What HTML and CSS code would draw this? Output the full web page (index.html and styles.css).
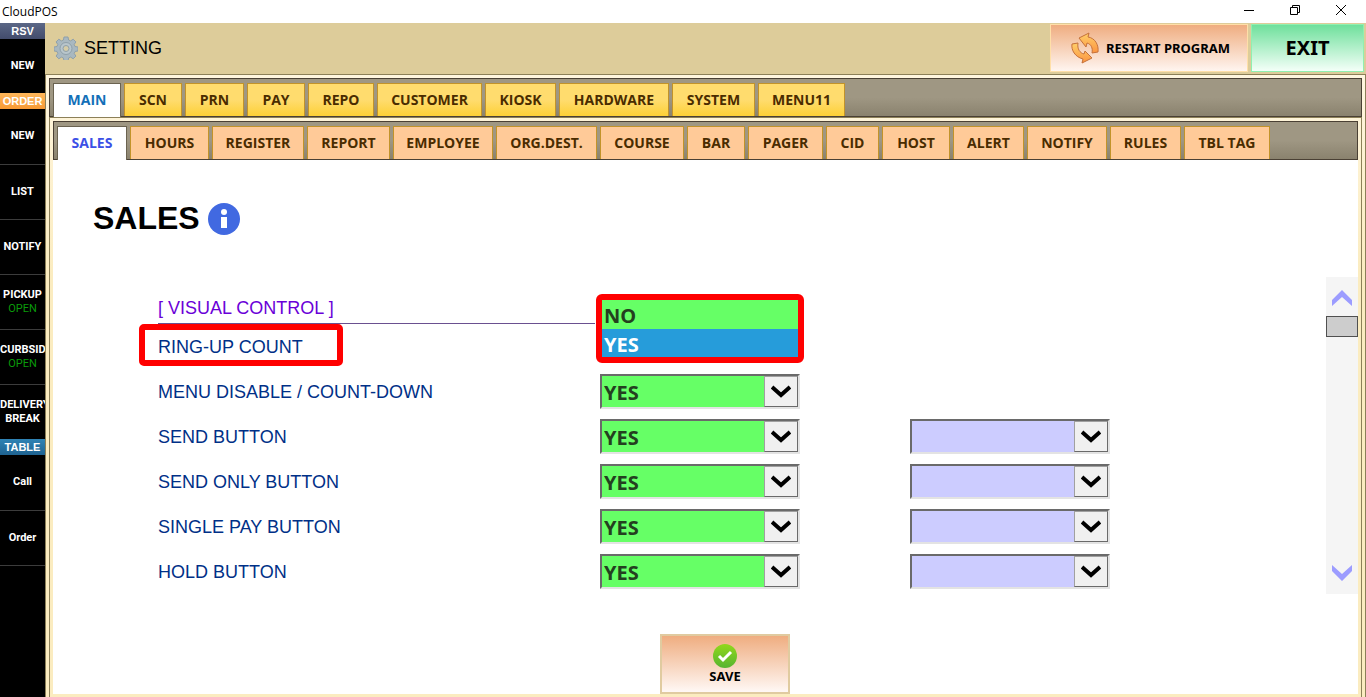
FILE: index.html
```html
<!DOCTYPE html>
<html lang="en">
    <head>
        <meta charset="utf-8">
        <title>CloudPOS</title>
        <link rel="stylesheet" href="styles.css">
    </head>
    <body>
    <div class="titlebar">
        <span class="app-name">CloudPOS</span>
        <div class="window-buttons">
            <button aria-label="Minimize"><svg width="12" height="12" viewBox="0 0 12 12"><path d="M1 6.500h10"/></svg></button>
            <button aria-label="Restore"><svg width="12" height="12" viewBox="0 0 12 12"><path d="M1.500 3.500h7v7h-7zM3.500 3.500v-2h7v7h-2"/></svg></button>
            <button aria-label="Close"><svg width="12" height="12" viewBox="0 0 12 12"><path d="M1 1l10 10M11 1L1 11"/></svg></button>
        </div>
    </div>
    <div class="window">
        <nav class="sidebar">
            <div class="group rsv">RSV</div>
            <button class="side-item first">NEW</button>
            <div class="group order">ORDER</div>
            <button class="side-item first">NEW</button>
            <button class="side-item">LIST</button>
            <button class="side-item">NOTIFY</button>
            <button class="side-item">PICKUP<span class="open">OPEN</span></button>
            <button class="side-item">CURBSID<span class="open">OPEN</span></button>
            <button class="side-item">DELIVERY<span>BREAK</span></button>
            <div class="group table">TABLE</div>
            <button class="side-item first">Call</button>
            <button class="side-item">Order</button>
        </nav>
        <div class="main">
            <header class="header">
                <svg class="gear" width="24" height="24" viewBox="0 0 24 24">
                    <g fill="#a9b8c0" stroke="#8fa0aa" stroke-width="1">
                        <path d="M10 1h4l.6 3 2 .9 2.600-1.700 2.700 2.700-1.700 2.600.8 2 3 .5v3.900l-3 .6-.8 2 1.700 2.600-2.700 2.700-2.600-1.700-2 .9-.6 3h-4l-.6-3-2-.9-2.600 1.700-2.700-2.700 1.700-2.600-.8-2-3-.6v-3.900l3-.5.8-2-1.700-2.600 2.700-2.700 2.600 1.700 2-.9z"/>
                        <circle cx="12" cy="12.500" r="6" fill="#b9c6cc"/>
                        <circle cx="12" cy="12.500" r="3" fill="#d6cda8"/>
                    </g>
                </svg>
                <span class="header-title">SETTING</span>
                <button class="restart">
                    <svg width="28" height="32" viewBox="0 0 28 32">
                        <defs>
                            <linearGradient id="arrows" x2="0" y2="1"><stop stop-color="#ffcf6a"/><stop offset="1" stop-color="#fb9440"/></linearGradient>
                        </defs>
                        <g fill="url(#arrows)" stroke="#c5713a" stroke-width="1" stroke-linejoin="round">
                            <path d="M8 6L18 1l-1 4c7 1 11 8 10 15l-6 1c1-5-1-9-5-10l-1 4z"/>
                            <path d="M1 12l6-1c-1 6 2 10 6 11l1-3 7 7-10 5 1-4C4 25 0 18 1 12z"/>
                        </g>
                    </svg>
                    <span>RESTART PROGRAM</span>
                </button>
                <button class="exit">EXIT</button>
            </header>
            <div class="frame">
                <nav class="tabs main-tabs">
                    <button class="active">MAIN</button>
                    <button>SCN</button>
                    <button>PRN</button>
                    <button>PAY</button>
                    <button>REPO</button>
                    <button>CUSTOMER</button>
                    <button>KIOSK</button>
                    <button>HARDWARE</button>
                    <button>SYSTEM</button>
                    <button>MENU11</button>
                </nav>
                <div class="panel">
                    <nav class="tabs sub-tabs">
                        <button class="active">SALES</button>
                        <button>HOURS</button>
                        <button>REGISTER</button>
                        <button>REPORT</button>
                        <button>EMPLOYEE</button>
                        <button>ORG.DEST.</button>
                        <button>COURSE</button>
                        <button>BAR</button>
                        <button>PAGER</button>
                        <button>CID</button>
                        <button>HOST</button>
                        <button>ALERT</button>
                        <button>NOTIFY</button>
                        <button>RULES</button>
                        <button>TBL TAG</button>
                    </nav>
                    <div class="page">
                        <div class="page-title">
                            <h1>SALES</h1>
                            <svg width="32" height="32" viewBox="0 0 32 32">
                                <circle cx="16" cy="16" r="16" fill="#4169e1"/>
                                <circle cx="16" cy="9" r="3" fill="#fff"/>
                                <path d="M13 14h6v11h-6z" fill="#fff"/>
                            </svg>
                        </div>
                        <div class="settings">
                            <div class="rows">
                                <h2>[ VISUAL CONTROL ]</h2>
                                <div class="row">
                                    <label class="marked" for="ringup">RING-UP COUNT</label>
                                    <div class="open-list">
                                        <select id="ringup" size="2">
                                            <option>NO</option>
                                            <option selected>YES</option>
                                        </select>
                                    </div>
                                </div>
                                <div class="row">
                                    <label for="disable">MENU DISABLE / COUNT-DOWN</label>
                                    <div class="combo">
                                        <select id="disable"><option>YES</option><option>NO</option></select>
                                        <span class="arrow"><svg width="20" height="14" viewBox="0 0 20 14"><path d="M1 2l9 8 9-8"/></svg></span>
                                    </div>
                                </div>
                                <div class="row">
                                    <label for="send">SEND BUTTON</label>
                                    <div class="combo">
                                        <select id="send"><option>YES</option><option>NO</option></select>
                                        <span class="arrow"><svg width="20" height="14" viewBox="0 0 20 14"><path d="M1 2l9 8 9-8"/></svg></span>
                                    </div>
                                    <div class="combo extra">
                                        <select aria-label="Send button option"><option></option></select>
                                        <span class="arrow"><svg width="20" height="14" viewBox="0 0 20 14"><path d="M1 2l9 8 9-8"/></svg></span>
                                    </div>
                                </div>
                                <div class="row">
                                    <label for="sendonly">SEND ONLY BUTTON</label>
                                    <div class="combo">
                                        <select id="sendonly"><option>YES</option><option>NO</option></select>
                                        <span class="arrow"><svg width="20" height="14" viewBox="0 0 20 14"><path d="M1 2l9 8 9-8"/></svg></span>
                                    </div>
                                    <div class="combo extra">
                                        <select aria-label="Send only button option"><option></option></select>
                                        <span class="arrow"><svg width="20" height="14" viewBox="0 0 20 14"><path d="M1 2l9 8 9-8"/></svg></span>
                                    </div>
                                </div>
                                <div class="row">
                                    <label for="single">SINGLE PAY BUTTON</label>
                                    <div class="combo">
                                        <select id="single"><option>YES</option><option>NO</option></select>
                                        <span class="arrow"><svg width="20" height="14" viewBox="0 0 20 14"><path d="M1 2l9 8 9-8"/></svg></span>
                                    </div>
                                    <div class="combo extra">
                                        <select aria-label="Single pay button option"><option></option></select>
                                        <span class="arrow"><svg width="20" height="14" viewBox="0 0 20 14"><path d="M1 2l9 8 9-8"/></svg></span>
                                    </div>
                                </div>
                                <div class="row">
                                    <label for="hold">HOLD BUTTON</label>
                                    <div class="combo">
                                        <select id="hold"><option>YES</option><option>NO</option></select>
                                        <span class="arrow"><svg width="20" height="14" viewBox="0 0 20 14"><path d="M1 2l9 8 9-8"/></svg></span>
                                    </div>
                                    <div class="combo extra">
                                        <select aria-label="Hold button option"><option></option></select>
                                        <span class="arrow"><svg width="20" height="14" viewBox="0 0 20 14"><path d="M1 2l9 8 9-8"/></svg></span>
                                    </div>
                                </div>
                            </div>
                            <div class="scroller">
                                <button class="up" aria-label="Scroll up"><svg width="20" height="16" viewBox="0 0 20 16"><path d="M0 10L10 0l10 10v6L10 7 0 16z"/></svg></button>
                                <div class="thumb"></div>
                                <button class="down" aria-label="Scroll down"><svg width="20" height="16" viewBox="0 0 20 16"><path d="M0 6l10 10L20 6V0l-10 9L0 0z"/></svg></button>
                            </div>
                        </div>
                        <button class="save">
                            <svg width="24" height="24" viewBox="0 0 24 24">
                                <defs>
                                    <linearGradient id="ok" x2="0" y2="1"><stop stop-color="#92d81c"/><stop offset="1" stop-color="#56b430"/></linearGradient>
                                </defs>
                                <circle cx="12" cy="12" r="12" fill="url(#ok)"/>
                                <path d="M6 12l4 4 8-8" fill="none" stroke="#fff" stroke-width="3"/>
                            </svg>
                            <span>SAVE</span>
                        </button>
                    </div>
                </div>
            </div>
        </div>
    </div>
    </body>
</html>
```
FILE: styles.css
```css
* {
    box-sizing: border-box;
}
body {
    margin: 0;
    height: 100vh;
    display: flex;
    flex-direction: column;
    font-family: "Liberation Sans", Arial, sans-serif;
    background: #fff;
    overflow: hidden;
}
button {
    margin: 0;
    padding: 0;
    border: 0;
    background: none;
    color: inherit;
    font-family: inherit;
}

/* window title */
.titlebar {
    display: flex;
    justify-content: space-between;
    align-items: center;
    height: 23px;
    padding-left: 2px;
}
.app-name {
    font-family: "Open Sans", sans-serif;
    font-size: 12px;
}
.window-buttons {
    display: flex;
    height: 21px;
    padding-right: 2px;
}
.window-buttons button {
    width: 46px;
}
.window-buttons svg {
    fill: none;
    stroke: #000;
}
.window {
    display: flex;
    flex: 1;
    min-height: 0;
}

/* left bar */
.sidebar {
    width: 45px;
    flex-shrink: 0;
    overflow: hidden;
    background: #000;
    color: #fff;
    font-size: 11px;
    font-weight: bold;
}
.group {
    height: 16px;
    line-height: 16px;
    text-align: center;
}
.rsv {
    background: linear-gradient(#5b6786, #434c6c);
}
.order {
    background: linear-gradient(#ffb75a, #f79a35);
}
.table {
    background: linear-gradient(#2f83b4, #1f6391);
}
.side-item {
    display: flex;
    flex-direction: column;
    align-items: safe center;
    justify-content: center;
    width: 45px;
    height: 55px;
    border-top: 1px solid #3c3c3c;
    font-family: Roboto, sans-serif;
    font-size: 11px;
    font-weight: bold;
    line-height: 14px;
}
.side-item.first {
    border-top: 0;
    padding-bottom: 1px;
}
.rsv + .side-item {
    height: 54px;
}
.side-item:last-child {
    height: 56px;
    border-bottom: 1px solid #3c3c3c;
}
.side-item .open {
    color: #0a9b0a;
    font-weight: normal;
}

/* header */
.main {
    display: flex;
    flex-direction: column;
    flex: 1;
    min-width: 0;
}
.header {
    display: flex;
    align-items: center;
    height: 52px;
    padding: 0 2px 2px 9px;
    background: #ddcc9a;
    border-bottom: 1px solid #8c8058;
}
.header-title {
    flex: 1;
    margin-left: 6px;
    padding-top: 2px;
    font-size: 18px;
}
.restart, .exit {
    display: flex;
    align-items: center;
    justify-content: center;
    height: 48px;
    font-family: "Noto Sans", sans-serif;
    font-weight: bold;
}
.restart {
    gap: 7px;
    width: 198px;
    margin-right: 3px;
    padding-left: 3px;
    border: 1px solid #ffdfa8;
    background: linear-gradient(#efad80, #fff5f0);
    font-size: 13px;
}
.exit {
    width: 113px;
    border: 1px solid #90f0b0;
    background: linear-gradient(#6fe09c, #f4fff8);
    font-size: 20px;
}

/* tabs */
.frame {
    display: flex;
    flex-direction: column;
    flex: 1;
    padding: 3px 3px 0 3px;
    border: 1px solid #8c8058;
    border-width: 0 1px;
    background: linear-gradient(#fff6df, #fbecc0 200px);
}
.tabs {
    display: grid;
    gap: 3px;
    height: 39px;
    padding: 4px 3px 0 3px;
    border: 1px solid #4a4034;
    background: linear-gradient(#9f9783 50%, #8a826e);
}
.main-tabs {
    grid-template-columns: 68px 58px 59px 58px 66px 105px 71px 110px 83px 87px;
}
.sub-tabs {
    grid-template-columns: 70px 79px 92px 83px 100px 101px 84px 58px 75px 53px 68px 71px 80px 71px 86px;
}
.tabs button {
    padding-bottom: 2px;
    border: 1px solid #c2932a;
    border-bottom: 0;
    font-family: "Open Sans", sans-serif;
    font-size: 14px;
    font-weight: bold;
    color: #4a2c00;
    white-space: nowrap;
}
.main-tabs button {
    background: linear-gradient(#ffdc6e 50%, #fdd036);
}
.sub-tabs button {
    background: #ffca98;
}
.tabs .active {
    margin-bottom: -1px;
    border-color: #6b6350;
    background: #fff;
}
.main-tabs .active {
    color: #1370b8;
}
.sub-tabs .active {
    color: #3c50e6;
}
.panel {
    display: flex;
    flex-direction: column;
    flex: 1;
    padding: 3px;
    border: 1px solid #8c8058;
    border-bottom: 0;
}
.page {
    display: flex;
    flex-direction: column;
    flex: 1;
    background: #fff;
}

/* settings */
.page-title {
    display: flex;
    align-items: center;
    gap: 8px;
    height: 37px;
    margin: 40px 0 0 40px;
}
h1 {
    margin: 0;
    font-size: 32px;
}
.settings {
    display: flex;
    margin-top: 40px;
}
.rows {
    flex: 1;
    padding: 16px 0 0 105px;
    font-size: 18px;
    color: #003087;
}
h2 {
    width: 437px;
    height: 31px;
    margin: 0;
    border-bottom: 1px solid #6a5090;
    font-size: 18px;
    font-weight: normal;
    line-height: 30px;
    color: #6a00d8;
}
.row {
    display: grid;
    grid-template-columns: 442px 310px 200px;
    align-items: center;
    height: 45px;
}
.row label {
    padding-top: 2px;
}
.marked {
    position: relative;
}
.marked::before {
    content: "";
    position: absolute;
    box-sizing: border-box;
    top: -11px;
    left: -19px;
    width: 204px;
    height: 42px;
    border: 6px solid #f00;
    border-radius: 5px;
}
.row select {
    display: block;
    width: 200px;
    height: 35px;
    margin: 0;
    padding: 1px 2px 0 2px;
    appearance: none;
    border: 2px solid;
    border-color: #6a6a6a #e3e3e3 #e3e3e3 #6a6a6a;
    border-radius: 0;
    background: #6f6;
    color: #24401f;
    font-family: "Open Sans", sans-serif;
    font-size: 20px;
    font-weight: bold;
    outline: 0;
}
.row .extra select {
    background: #ccf;
}
.combo {
    position: relative;
    width: 200px;
}
.arrow {
    position: absolute;
    top: 2px;
    right: 2px;
    display: flex;
    align-items: center;
    justify-content: center;
    width: 34px;
    height: 31px;
    border: 1px solid;
    border-color: #a0a0a0 #6a6a6a #6a6a6a #a0a0a0;
    background: #f0f0f0;
    pointer-events: none;
}
.arrow svg {
    fill: none;
    stroke: #000;
    stroke-width: 4;
}
.open-list {
    position: relative;
    height: 45px;
}
.row .open-list select {
    position: absolute;
    top: -30px;
    left: -4px;
    width: 208px;
    height: 69px;
    padding: 0;
    border: 6px solid #f00;
    border-radius: 6px;
    overflow: hidden;
}
.open-list option {
    height: 28px;
    min-height: 28px;
    padding: 2px 2px 0 2px;
    font-weight: bold;
}
.open-list option:first-child {
    height: 31px;
    min-height: 31px;
    padding-top: 4px;
}
.open-list option:checked {
    background: linear-gradient(#269cda, #269cda);
    color: #fff;
    -webkit-text-fill-color: #fff;
}
.scroller {
    display: flex;
    flex-direction: column;
    width: 32px;
    height: 317px;
    background: #f5f5f5;
}
.scroller button {
    height: 39px;
}
.scroller .up {
    padding-top: 6px;
}
.scroller svg {
    fill: #9c9cff;
}
.thumb {
    height: 21px;
    border: 1px solid #505050;
    background: #cdcdcd;
}
.scroller .down {
    margin-top: auto;
}
.save {
    display: flex;
    flex-direction: column;
    align-items: center;
    justify-content: center;
    width: 130px;
    height: 60px;
    margin: 40px 0 0 607px;
    border: 2px solid #e0cba0;
    background: linear-gradient(#efad80, #fff8f5);
    font-family: "Noto Sans", sans-serif;
    font-size: 13px;
    font-weight: bold;
    line-height: 16px;
}
```
